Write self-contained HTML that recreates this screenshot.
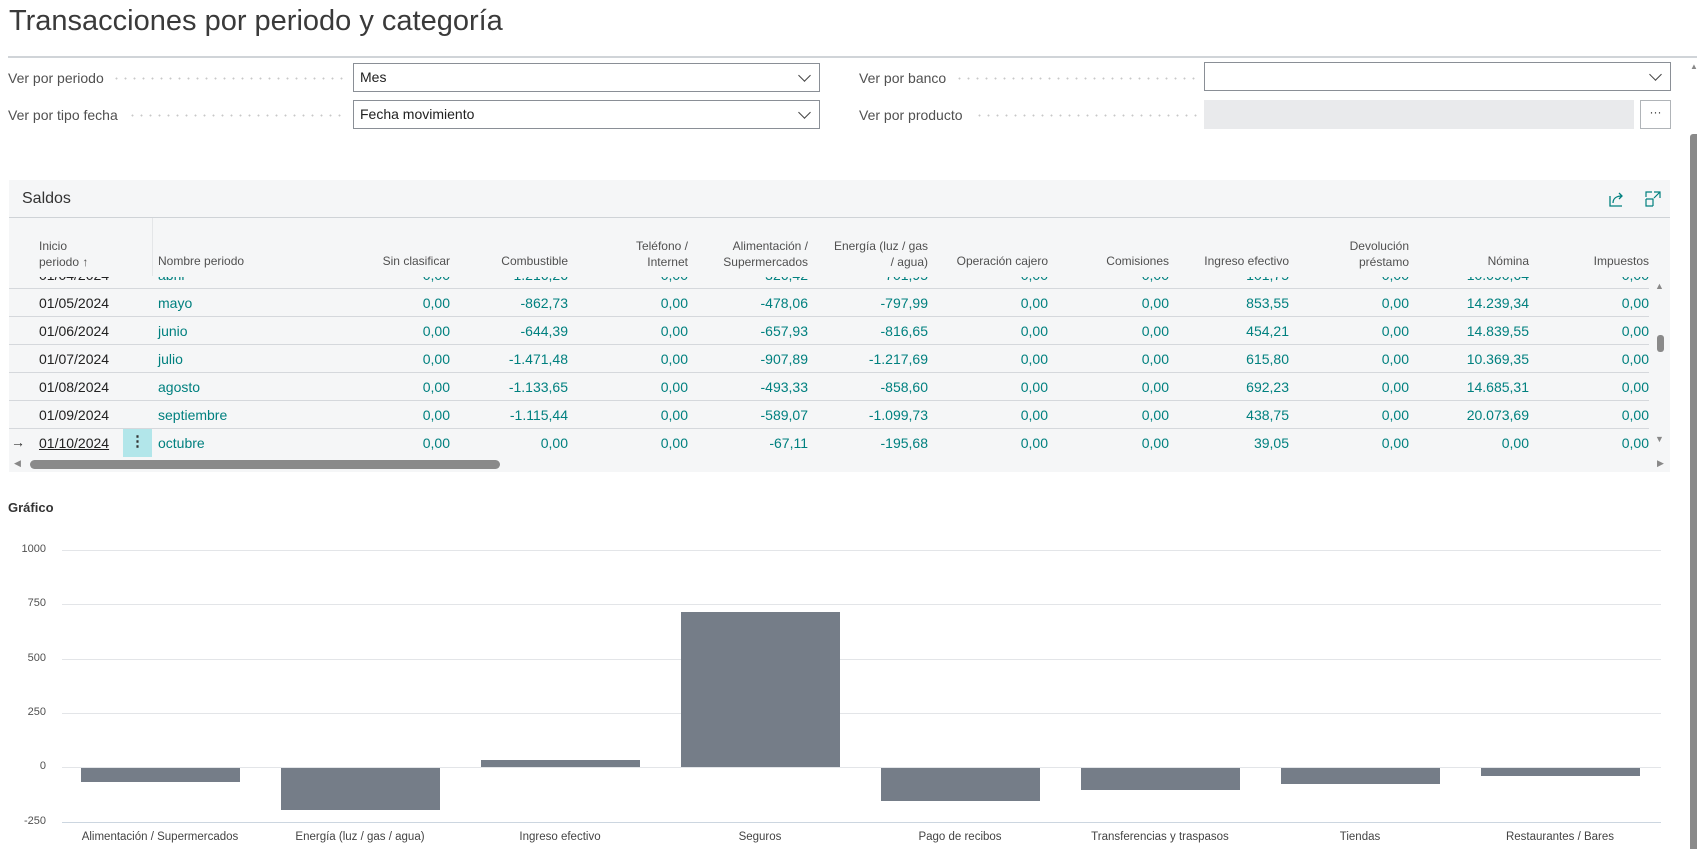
<!DOCTYPE html>
<html><head><meta charset="utf-8"><style>
*{box-sizing:border-box;margin:0;padding:0}
body{width:1697px;height:849px;overflow:hidden;background:#fff;font-family:"Liberation Sans",sans-serif;color:#212121;position:relative}
.a{position:absolute;white-space:nowrap}
.lbl{font-size:14px;color:#505050}
.dots{background-image:radial-gradient(circle,#c8c8c8 0.9px,transparent 1.1px);background-size:9px 3px;height:3px}
.inp{border:1px solid #8a8f96;background:#fff;height:29px;font-size:14px;line-height:27px;padding-left:6px}
.chev{position:absolute;right:10px;top:7px;width:9px;height:9px;border-right:1.3px solid #444;border-bottom:1.3px solid #444;transform:rotate(45deg)}
.hd{font-size:12px;color:#505050;line-height:16px}
.r{text-align:right}
.cell{font-size:14px;color:#00807f}
.row{position:absolute;left:9px;width:1640px;height:28px;border-bottom:1px solid #d5d8dc}
.ax{font-size:11px;color:#505050;text-align:right;width:40px}
.xl{font-size:11.5px;color:#444;text-align:center;width:200px}
.bar{position:absolute;background:#757d88;width:159px}
.gl{position:absolute;left:62px;width:1599px;height:1px;background:#e3e5e8}
</style></head><body>
<div class="a" style="left:9px;top:5px;font-size:29px;color:#3a3a3a;font-weight:300">Transacciones por periodo y categoría</div>
<div class="a" style="left:8px;top:56px;width:1689px;height:2px;background:#d0d4d8"></div>

<div class="a lbl" style="left:8px;top:70px">Ver por periodo</div>
<div class="a dots" style="left:112px;top:77px;width:234px"></div>
<div class="a inp" style="left:353px;top:63px;width:467px">Mes<span class="chev"></span></div>
<div class="a lbl" style="left:8px;top:107px">Ver por tipo fecha</div>
<div class="a dots" style="left:128px;top:114px;width:218px"></div>
<div class="a inp" style="left:353px;top:100px;width:467px">Fecha movimiento<span class="chev"></span></div>

<div class="a lbl" style="left:859px;top:70px">Ver por banco</div>
<div class="a dots" style="left:955px;top:77px;width:242px"></div>
<div class="a inp" style="left:1204px;top:62px;width:467px"><span class="chev"></span></div>
<div class="a lbl" style="left:859px;top:107px">Ver por producto</div>
<div class="a dots" style="left:975px;top:114px;width:222px"></div>
<div class="a" style="left:1204px;top:100px;width:430px;height:29px;background:#e9eaec"></div>
<div class="a" style="left:1640px;top:100px;width:31px;height:29px;border:1px solid #b0b4b8;font-size:12px;text-align:center;line-height:22px;color:#333">···</div>

<div class="a" style="left:1690px;top:62px;width:7px;height:8px;color:#888;font-size:8px">▲</div>
<div class="a" style="left:1690px;top:134px;width:7px;height:715px;background:#8a8a8a;border-radius:3px 0 0 0"></div>

<div class="a" style="left:9px;top:180px;width:1661px;height:292px;background:#f5f6f7"></div>
<div class="a" style="left:9px;top:217px;width:1661px;height:1px;background:#cfd3d7"></div>
<div class="a" style="left:22px;top:190px;font-size:16px;color:#333">Saldos</div>
<svg class="a" style="left:1608px;top:191px" width="18" height="16" viewBox="0 0 18 16"><path d="M2 5v10h12" fill="none" stroke="#00807f" stroke-width="1.3"/><path d="M5 12c0-5 4-7 9-7M11 2l3 3-3 3" fill="none" stroke="#00807f" stroke-width="1.3"/></svg>
<svg class="a" style="left:1645px;top:191px" width="16" height="16" viewBox="0 0 16 16"><path d="M1 8v7h7M1 8h7v7M9 1h6v6M15 1l-6 6M1 6V1h6" fill="none" stroke="#00807f" stroke-width="1.2"/></svg>

<div class="a" style="left:9px;top:277px;width:1640px;height:180px;overflow:hidden">
<div style="position:absolute;top:-16px;left:0;width:1640px">
<div id="rows"></div>
</div></div>

<div class="a" style="left:152px;top:218px;width:1px;height:58px;background:#e4e6e8"></div>
<div class="a hd" style="left:39px;top:238px">Inicio<br>periodo ↑</div>
<div class="a hd" style="left:158px;top:253px">Nombre periodo</div>
<div class="a hd r" style="left:350px;width:100px;top:253px">Sin clasificar</div>
<div class="a hd r" style="left:468px;width:100px;top:253px">Combustible</div>
<div class="a hd r" style="left:588px;width:100px;top:238px">Teléfono /<br>Internet</div>
<div class="a hd r" style="left:688px;width:120px;top:238px">Alimentación /<br>Supermercados</div>
<div class="a hd r" style="left:808px;width:120px;top:238px">Energía (luz / gas<br>/ agua)</div>
<div class="a hd r" style="left:928px;width:120px;top:253px">Operación cajero</div>
<div class="a hd r" style="left:1049px;width:120px;top:253px">Comisiones</div>
<div class="a hd r" style="left:1169px;width:120px;top:253px">Ingreso efectivo</div>
<div class="a hd r" style="left:1289px;width:120px;top:238px">Devolución<br>préstamo</div>
<div class="a hd r" style="left:1409px;width:120px;top:253px">Nómina</div>
<div class="a hd r" style="left:1529px;width:120px;top:253px">Impuestos</div>

<div class="a" style="left:1655px;top:281px;font-size:9px;color:#888">▲</div>
<div class="a" style="left:1657px;top:335px;width:7px;height:17px;background:#8a8a8a;border-radius:3px"></div>
<div class="a" style="left:1655px;top:434px;font-size:9px;color:#888">▼</div>
<div class="a" style="left:14px;top:458px;font-size:9px;color:#888">◀</div>
<div class="a" style="left:30px;top:460px;width:470px;height:9px;background:#8a8a8a;border-radius:5px"></div>
<div class="a" style="left:1657px;top:458px;font-size:9px;color:#888">▶</div>

<div class="a" style="left:8px;top:500px;font-size:13px;font-weight:bold;color:#333">Gráfico</div>

<div class="gl" style="top:550px"></div><div class="gl" style="top:604px"></div><div class="gl" style="top:659px"></div><div class="gl" style="top:713px"></div><div class="gl" style="top:767px"></div><div class="gl" style="top:822px;background:#ccd6e0"></div>
<div class="a ax" style="left:6px;top:543px">1000</div>
<div class="a ax" style="left:6px;top:597px">750</div>
<div class="a ax" style="left:6px;top:652px">500</div>
<div class="a ax" style="left:6px;top:706px">250</div>
<div class="a ax" style="left:6px;top:760px">0</div>
<div class="a ax" style="left:6px;top:815px">-250</div>

<div class="bar" style="left:81px;top:768px;height:14px"></div>
<div class="bar" style="left:281px;top:768px;height:42px"></div>
<div class="bar" style="left:481px;top:760px;height:7px"></div>
<div class="bar" style="left:681px;top:612px;height:155px"></div>
<div class="bar" style="left:881px;top:768px;height:33px"></div>
<div class="bar" style="left:1081px;top:768px;height:22px"></div>
<div class="bar" style="left:1281px;top:768px;height:16px"></div>
<div class="bar" style="left:1481px;top:768px;height:8px"></div>

<div class="a xl" style="left:60px;top:831px">Alimentación / Supermercados</div>
<div class="a xl" style="left:260px;top:831px">Energía (luz / gas / agua)</div>
<div class="a xl" style="left:460px;top:831px">Ingreso efectivo</div>
<div class="a xl" style="left:660px;top:831px">Seguros</div>
<div class="a xl" style="left:860px;top:831px">Pago de recibos</div>
<div class="a xl" style="left:1060px;top:831px">Transferencias y traspasos</div>
<div class="a xl" style="left:1260px;top:831px">Tiendas</div>
<div class="a xl" style="left:1460px;top:831px">Restaurantes / Bares</div>

<script>
var d=[
["01/04/2024","abril","0,00","-1.216,26","0,00","-326,42","-701,95","0,00","0,00","101,75","0,00","10.090,64","0,00"],
["01/05/2024","mayo","0,00","-862,73","0,00","-478,06","-797,99","0,00","0,00","853,55","0,00","14.239,34","0,00"],
["01/06/2024","junio","0,00","-644,39","0,00","-657,93","-816,65","0,00","0,00","454,21","0,00","14.839,55","0,00"],
["01/07/2024","julio","0,00","-1.471,48","0,00","-907,89","-1.217,69","0,00","0,00","615,80","0,00","10.369,35","0,00"],
["01/08/2024","agosto","0,00","-1.133,65","0,00","-493,33","-858,60","0,00","0,00","692,23","0,00","14.685,31","0,00"],
["01/09/2024","septiembre","0,00","-1.115,44","0,00","-589,07","-1.099,73","0,00","0,00","438,75","0,00","20.073,69","0,00"],
["01/10/2024","octubre","0,00","0,00","0,00","-67,11","-195,68","0,00","0,00","39,05","0,00","0,00","0,00"]];
var R=[441,559,679,799,919,1039,1160,1280,1400,1520,1640];
var h="";
d.forEach(function(r,i){
 var t=i*28, last=i==6;
 h+='<div class="row" style="left:0;top:'+t+'px;'+(last?'border-bottom:none':'')+'">';
 if(last){h+='<div class="a" style="left:2px;top:5px;font-size:14px;color:#333">→</div><div class="a" style="left:114px;top:0;width:29px;height:28px;background:#b2e6ea;text-align:center;font-size:15px;line-height:26px;color:#333;font-weight:bold">⋮</div>';}
 h+='<div class="a" style="left:30px;top:6px;font-size:14px;color:#212121;'+(last?'text-decoration:underline':'')+'">'+r[0]+'</div>';
 h+='<div class="a cell" style="left:149px;top:6px">'+r[1]+'</div>';
 for(var k=0;k<11;k++)h+='<div class="a cell r" style="left:'+(R[k]-110)+'px;width:110px;top:6px">'+r[k+2]+'</div>';
 h+='</div>';
});
document.getElementById("rows").innerHTML=h;
</script>
</body></html>
